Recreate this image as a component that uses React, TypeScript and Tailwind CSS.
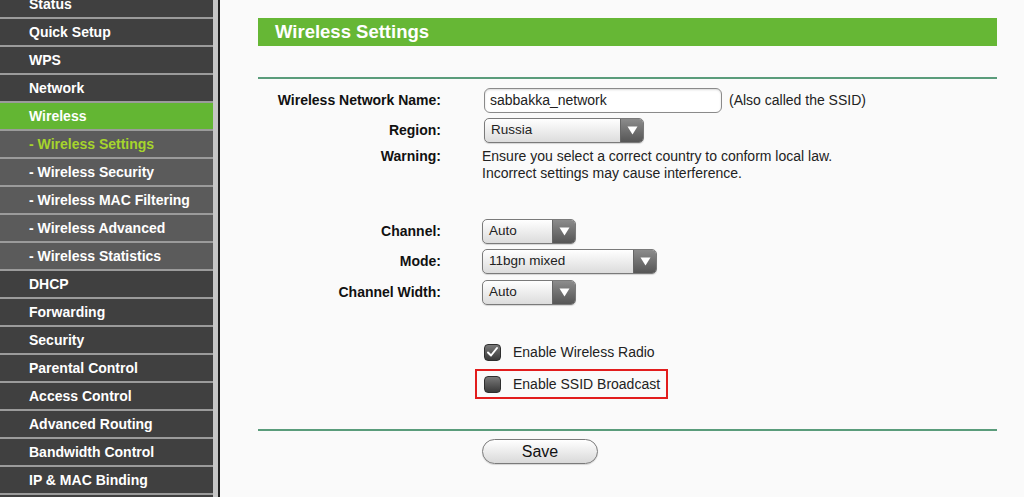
import React from 'react';

type NavItem = { label: string; sub?: boolean; active?: boolean };

const navItems: NavItem[] = [
  { label: 'Status' },
  { label: 'Quick Setup' },
  { label: 'WPS' },
  { label: 'Network' },
  { label: 'Wireless', active: true },
  { label: '- Wireless Settings', sub: true, active: true },
  { label: '- Wireless Security', sub: true },
  { label: '- Wireless MAC Filtering', sub: true },
  { label: '- Wireless Advanced', sub: true },
  { label: '- Wireless Statistics', sub: true },
  { label: 'DHCP' },
  { label: 'Forwarding' },
  { label: 'Security' },
  { label: 'Parental Control' },
  { label: 'Access Control' },
  { label: 'Advanced Routing' },
  { label: 'Bandwidth Control' },
  { label: 'IP & MAC Binding' },
];

function SideNav() {
  return (
    <div className="flex h-[497px] shrink-0 overflow-hidden">
      <nav className="w-[213px] -mt-[9px] flex flex-col bg-[#404040]">
        {navItems.map((item) => {
          let cls = 'bg-[#404040] text-white';
          if (item.sub) cls = item.active ? 'bg-[#5b5b5b] text-[#a6d52c]' : 'bg-[#5b5b5b] text-white';
          else if (item.active) cls = 'bg-[#63b633] text-white';
          return (
            <div
              key={item.label}
              className={`h-[28px] shrink-0 border-b-2 border-[#9b9b9b] pl-[29px] flex items-center text-[14px] font-bold ${cls}`}
            >
              {item.label}
            </div>
          );
        })}
      </nav>
      <div className="w-[5px] bg-[#c6c6c6]" />
      <div className="w-[2px] bg-[#222222]" />
    </div>
  );
}

function Select({ value, width }: { value: string; width: string }) {
  return (
    <div
      className={`${width} h-[25px] flex rounded-[5px] border border-[#7a7a7a] overflow-hidden bg-gradient-to-b from-white to-[#dcdcdc] shadow-[0_1px_1px_rgba(0,0,0,0.15)]`}
    >
      <div className="flex-1 flex items-center pl-[6px] text-[13.5px] text-[#222]">{value}</div>
      <div className="w-[23px] flex items-center justify-center border-l border-[#666] bg-gradient-to-b from-[#8c8c8c] to-[#565656]">
        <svg width="11" height="9" viewBox="0 0 11 9">
          <path d="M0.5 0.5 L10.5 0.5 L5.5 8.5 Z" fill="#ffffff" />
        </svg>
      </div>
    </div>
  );
}

function Checkbox({ checked }: { checked?: boolean }) {
  return (
    <div className="w-[17px] h-[17px] rounded-[4px] border border-[#2e2e2e] bg-gradient-to-b from-[#7a7a7a] to-[#3a3a3a] flex items-center justify-center">
      {checked && (
        <svg width="13" height="12" viewBox="0 0 13 12">
          <path d="M2 6.5 L5 9.5 L11 2" stroke="#ffffff" strokeWidth="2" fill="none" strokeLinecap="round" strokeLinejoin="round" />
        </svg>
      )}
    </div>
  );
}

function Label({ children }: { children: React.ReactNode }) {
  return <div className="w-[183px] shrink-0 text-right font-bold text-[14px] text-[#111]">{children}</div>;
}

export default function App() {
  return (
    <div className="w-[1024px] h-[497px] flex overflow-hidden bg-[#fafafa] font-['Liberation_Sans',Arial,sans-serif]">
      <SideNav />
      <main className="flex-1 pl-[38px] pr-[27px] pt-[18px]">
        <div className="h-[28px] bg-[#66b735] flex items-center pl-[17px]">
          <h1 className="text-white font-bold text-[18.5px]">Wireless Settings</h1>
        </div>

        <div className="mt-[31px] h-[2px] bg-[#5a9c7b]" />

        <div className="mt-[9px] flex items-center h-[25px]">
          <Label>Wireless Network Name:</Label>
          <div className="ml-[43px] w-[238px] h-[25px] rounded-[6px] border border-[#8a8a8a] bg-white flex items-center pl-[5px] text-[14px] text-[#222] shadow-[inset_0_1px_2px_rgba(0,0,0,0.15)]">
            sabbakka_network
          </div>
          <span className="ml-[7px] text-[14px] text-[#222]">(Also called the SSID)</span>
        </div>

        <div className="mt-[5px] flex items-center h-[25px]">
          <Label>Region:</Label>
          <div className="ml-[43px]">
            <Select value="Russia" width="w-[160px]" />
          </div>
        </div>

        <div className="mt-[5px] flex">
          <div className="w-[183px] shrink-0 text-right font-bold text-[14px] leading-[17px] text-[#111]">Warning:</div>
          <div className="ml-[41px] text-[14px] leading-[17px] text-[#222]">
            <p>Ensure you select a correct country to conform local law.</p>
            <p>Incorrect settings may cause interference.</p>
          </div>
        </div>

        <div className="mt-[37px] flex items-center h-[25px]">
          <Label>Channel:</Label>
          <div className="ml-[41px]">
            <Select value="Auto" width="w-[94px]" />
          </div>
        </div>

        <div className="mt-[5px] flex items-center h-[25px]">
          <Label>Mode:</Label>
          <div className="ml-[41px]">
            <Select value="11bgn mixed" width="w-[175px]" />
          </div>
        </div>

        <div className="mt-[6px] flex items-center h-[25px]">
          <Label>Channel Width:</Label>
          <div className="ml-[41px]">
            <Select value="Auto" width="w-[94px]" />
          </div>
        </div>

        <div className="mt-[32px] flex items-center h-[30px] pl-[226px] gap-[12px]">
          <Checkbox checked />
          <span className="text-[14px] text-[#222]">Enable Wireless Radio</span>
        </div>

        <div className="mt-[2px] ml-[217px] w-[193px] h-[30px] border-2 border-[#e21d1d] flex items-center pl-[7px] gap-[12px]">
          <Checkbox />
          <span className="text-[14px] text-[#222]">Enable SSID Broadcast</span>
        </div>

        <div className="mt-[30px] h-[2px] bg-[#5a9c7b]" />

        <div className="mt-[8px] pl-[224px]">
          <button className="w-[116px] h-[25px] rounded-full border border-[#7a7a7a] bg-gradient-to-b from-white to-[#d9d9d9] text-[16px] text-[#111] shadow-[0_1px_1px_rgba(0,0,0,0.15)]">
            Save
          </button>
        </div>
      </main>
    </div>
  );
}
